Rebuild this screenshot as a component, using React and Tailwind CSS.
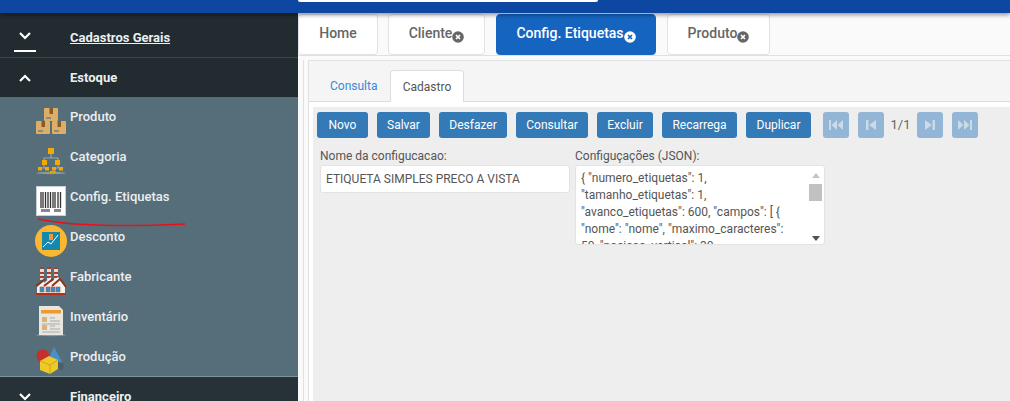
const F = { fontFamily: 'Roboto, "Liberation Sans", sans-serif' };

const Chevron = ({ up }) => (
  <svg width="12" height="8" viewBox="0 0 12 8" fill="none" stroke="#fff" strokeWidth="2.2">
    <path d={up ? "M1 7l5-5 5 5" : "M1 1l5 5 5-5"} />
  </svg>
);

const Box = ({ x, y }) => (
  <g transform={`translate(${x} ${y})`}>
    <rect width="14" height="13" rx="1" fill="#dcae66" />
    <rect x="5.5" width="3.5" height="6" fill="#8a5a2a" />
    <rect x="2" y="9" width="5" height="2" fill="#8b8b80" />
  </g>
);

const icons = {
  produto: (
    <svg width="32" height="28" viewBox="0 0 32 28">
      <Box x="9" y="1" /><Box x="1" y="14" /><Box x="17" y="14" />
    </svg>
  ),
  categoria: (
    <svg width="32" height="28" viewBox="0 0 32 28">
      <ellipse cx="16" cy="26" rx="15" ry="1.2" fill="#8d9ca3" />
      <path d="M16 6v5M9 14v-3h14v3M9 18v3M5 23v-2h8v2M23 18v3M19 23v-2h8v2" stroke="#9aa5a8" strokeWidth="1.2" fill="none" />
      <rect x="13" y="1" width="6" height="6" fill="#f2a900" />
      <rect x="7" y="13" width="5" height="5" fill="#f2a900" /><rect x="20" y="13" width="5" height="5" fill="#f2a900" />
      <rect x="3" y="20" width="4" height="3.5" fill="#f2a900" /><rect x="10" y="20" width="4" height="3.5" fill="#f2a900" />
      <rect x="17" y="20" width="4" height="3.5" fill="#f2a900" /><rect x="24" y="20" width="4" height="3.5" fill="#f2a900" />
      <rect x="15" y="24" width="2.5" height="2" fill="#f2a900" /><rect x="18" y="24" width="2.5" height="2" fill="#f2a900" />
    </svg>
  ),
  etiqueta: (
    <svg width="30" height="30" viewBox="0 0 30 30">
      <rect x="0.5" y="0.5" width="29" height="29" fill="#fff" stroke="#c9cfd2" />
      <path d="M5 6v16M7 6v16M9.500 6v16M12 6v16M14.500 6v16M17 6v16M19 6v16M22 6v16M24.500 6v16" stroke="#333" strokeWidth="1.300" />
      <rect x="5" y="23" width="9" height="3" fill="#888" /><rect x="18" y="23" width="7" height="3" fill="#888" />
    </svg>
  ),
  desconto: (
    <svg width="32" height="32" viewBox="0 0 32 32">
      <circle cx="16" cy="16" r="16" fill="#fbb72f" />
      <rect x="7" y="7" width="18" height="18" fill="#1687ad" />
      <path d="M8 22l5-5 3 2 7-9" stroke="#fff" strokeWidth="1" fill="none" />
      <rect x="14" y="9" width="4" height="6" fill="#f39a35" />
    </svg>
  ),
  fabricante: (
    <svg width="32" height="30" viewBox="0 0 32 30">
      {[5, 12, 19].map((x) => (
        <g key={x}>
          <rect x={x} y="1" width="4" height="13" fill="#ddd" />
          <rect x={x} y="1" width="4" height="2" fill="#a8402a" /><rect x={x} y="6" width="4" height="2" fill="#a8402a" /><rect x={x} y="10" width="4" height="2" fill="#a8402a" />
        </g>
      ))}
      <path d="M2 21l7-6v2l7-6v5l7-5 7 9v7H2z" fill="#f2f2f0" />
      <path d="M1 20l9-7M9 20l9-7M17 20l8-7 6 8" stroke="#93301f" strokeWidth="2" fill="none" />
      {[5, 11, 16, 21].map((x) => <rect key={x} x={x} y="21" width="4" height="5" fill="#2f8fd0" stroke="#c3562f" strokeWidth="0.6" />)}
      <rect x="1" y="27" width="30" height="2" fill="#b5301c" />
    </svg>
  ),
  inventario: (
    <svg width="32" height="32" viewBox="0 0 32 32">
      <ellipse cx="16" cy="30" rx="15" ry="1.200" fill="#8d9ca3" />
      <path d="M4 1h20l4 4v25H4z" fill="#e8e6df" />
      <rect x="6" y="5" width="20" height="3.500" fill="#ec9a29" />
      <rect x="7" y="12" width="5" height="5" fill="#d9b47a" /><rect x="7" y="20" width="5" height="5" fill="#d9b47a" />
      <path d="M15 13h5M15 16h10M7 19h18M15 21h5M15 24h10M7 27h18" stroke="#a9adac" strokeWidth="1" />
    </svg>
  ),
  producao: (
    <svg width="32" height="28" viewBox="0 0 32 28">
      <path d="M19 0l8 15-5 4-9-6z" fill="#4a90c8" />
      <path d="M22 14l7 3-1 6-5-1z" fill="#4f5f66" />
      <circle cx="8" cy="9" r="6.500" fill="#c4302b" />
      <path d="M14 9l9 4v9l-8 5-10-4v-9z" fill="#eeca28" />
      <path d="M5 14l10 4 8-5M15 18v9" stroke="#b99a10" strokeWidth="0.700" fill="none" />
    </svg>
  ),
};

const items = [
  ["Produto", "produto"], ["Categoria", "categoria"], ["Config. Etiquetas", "etiqueta"], ["Desconto", "desconto"],
  ["Fabricante", "fabricante"], ["Inventário", "inventario"], ["Produção", "producao"],
];

const Sidebar = () => (
  <aside className="w-[298px] shrink-0 flex flex-col h-[388px] overflow-hidden bg-[#263238] relative">
    <div className="h-[45px] shrink-0 flex bg-[#212b30] border-b border-[#3a464c]">
      <div className="w-[50px] mr-[20px] flex justify-center">
        <div className="w-[22px] h-[39px] pt-[8px] flex items-center justify-center border-b-2 border-white"><Chevron /></div>
      </div>
      <span className="text-[13px] font-bold text-[#eceff1] underline leading-[15px] mt-[17px]">Cadastros Gerais</span>
    </div>
    <div className="h-[39px] shrink-0 flex items-center bg-[#212b30]">
      <div className="w-[50px] mr-[20px] flex justify-center"><Chevron up /></div>
      <span className="text-[13px] font-bold text-[#eceff1]">Estoque</span>
    </div>
    <div className="h-[280px] shrink-0 bg-[#566e7a] border-b border-[#7e929c] flex flex-col">
      {items.map(([label, key]) => (
        <div key={key} className="h-[40px] shrink-0 flex relative">
          <div className="w-[70px] h-[40px] pt-[8px] pl-[34px] pr-[2px] flex items-center justify-center shrink-0">{icons[key]}</div>
          <span className="text-[13px] font-medium text-[#eceff1] leading-[15px] mt-[12px]">{label}</span>
        </div>
      ))}
    </div>
    <div className="h-[40px] shrink-0 flex items-center bg-[#263238]">
      <div className="w-[50px] mr-[20px] flex justify-center"><Chevron /></div>
      <span className="text-[13px] font-bold text-[#eceff1]">Financeiro</span>
    </div>
    <svg className="absolute left-[36px] top-[205px]" width="150" height="12" viewBox="0 0 150 12" fill="none">
      <path d="M2 1C20 5 60 10 149 6" stroke="#e8101a" strokeWidth="1.300" />
    </svg>
  </aside>
);

const MainTab = ({ label, close, active, w }) => (
  <div className={`h-[41px] rounded-[4px] border flex items-center justify-center text-[14px] font-medium ${w} ${active ? "bg-[#1565c0] border-[#1565c0] text-white" : "bg-white border-[#dfe3e6] text-[#666]"}`}>
    <span className="-mt-[3px]">{label}</span>
    {close && (
      <svg className="mt-[4px]" width="12" height="12" viewBox="0 0 12 12">
        <circle cx="6" cy="6" r="5.800" fill={active ? "#fff" : "#666"} />
        <path d="M4 4l4 4M8 4l-4 4" stroke={active ? "#1565c0" : "#fff"} strokeWidth="1.700" />
      </svg>
    )}
  </div>
);

const Btn = ({ children, w }) => (
  <button className={`h-[26px] rounded-[3px] bg-[#337ab7] text-white text-[12px] text-center ${w}`}>{children}</button>
);

const Pager = ({ d }) => (
  <div className="w-[26px] h-[26px] rounded-[3px] bg-[#93b5d6] flex items-center justify-center">
    <svg width="16" height="12" viewBox="0 0 16 12" fill="#c9dae9"><path d={d} /></svg>
  </div>
);

const json = `{ "numero_etiquetas": 1, "tamanho_etiquetas": 1, "avanco_etiquetas": 600, "campos": [ { "nome": "nome", "maximo_caracteres": 50, "posicao_vertical": 30,`;

const Main = () => (
  <main className="flex-1 min-w-0 bg-[#fafafa] h-[388px] overflow-hidden">
    <div className="h-[43px] flex gap-[10px] pt-px border-b border-[#e0e0e0]">
      <MainTab label="Home" w="w-[80px]" />
      <MainTab label="Cliente" close w="w-[97px]" />
      <MainTab label="Config. Etiquetas" close active w="w-[160px] ml-[1px]" />
      <MainTab label="Produto" close w="w-[103px] ml-[1px]" />
    </div>
    <div className="mt-[4px] ml-[5px] h-[341px] border-l border-[#e0e0e0] pl-[4px]">
      <div className="h-[341px] bg-[#f5f5f5] border-t border-l border-[#dfe1e3]">
        <div className="h-[41px] flex items-end pl-[10px] border-b border-[#dddddd]">
          <div className="w-[71px] h-[31px] flex items-center pl-[11px] text-[12px] text-[#3a87d6]">Consulta</div>
          <div className="w-[74px] h-[32px] -mb-px flex items-center justify-center text-[12px] text-[#555] bg-white border border-b-0 border-[#dddddd] rounded-t-[4px]">Cadastro</div>
        </div>
        <div className="bg-white pl-[4px] pt-[5px] h-[299px]">
          <div className="bg-[#eeeeee] h-[294px]">
            <div className="flex items-center pt-[5px] pl-[4px]">
              <div className="flex gap-[9px]">
                <Btn w="w-[51px]">Novo</Btn>
                <Btn w="w-[53px]">Salvar</Btn>
                <Btn w="w-[68px]">Desfazer</Btn>
                <Btn w="w-[72px]">Consultar</Btn>
                <Btn w="w-[56px]">Excluir</Btn>
                <Btn w="w-[75px]">Recarrega</Btn>
                <Btn w="w-[65px]">Duplicar</Btn>
              </div>
              <div className="flex items-center ml-[12px]">
                <Pager d="M1 1h2v10H1zM9 1v10L3.500 6zM15 1v10L9.500 6z" />
                <div className="w-[9px]" />
                <Pager d="M3 1h2.500v10H3zM13 1v10L6 6z" />
                <span className="w-[33px] text-center text-[13px] text-[#666]">1/1</span>
                <Pager d="M3 1v10l7-5zM10.500 1H13v10h-2.500z" />
                <div className="w-[9px]" />
                <Pager d="M1 1v10l5.500-5zM7 1v10l5.500-5zM13 1h2v10h-2z" />
              </div>
            </div>
            <div className="flex gap-[5px] pl-[7px] pt-[11px]">
              <div className="w-[250px]">
                <div className="text-[12px] text-[#555] leading-[14px] mb-[2px]">Nome da configucacao:</div>
                <div className="h-[28px] bg-white rounded-[3px] border border-[#e3e3e3] flex items-center pl-[5px] text-[12px] text-[#555]">ETIQUETA SIMPLES PRECO A VISTA</div>
              </div>
              <div className="w-[250px]">
                <div className="text-[12px] text-[#555] leading-[14px] mb-[2px]">Configuçações (JSON):</div>
                <div className="h-[80px] bg-white rounded-[3px] border border-[#e3e3e3] flex overflow-hidden">
                  <div className="flex-1 overflow-hidden pl-[5px] pt-[4px] pr-[10px] text-[12px] leading-[17px] text-[#555]">{json}</div>
                  <div className="w-[17px] shrink-0 flex flex-col items-center pt-[7px]">
                    <svg width="8" height="5" viewBox="0 0 8 5"><path d="M4 0l4 5H0z" fill="#c4c4c4" /></svg>
                    <div className="w-[13px] h-[17px] bg-[#c1c1c1] mt-[6px]" />
                    <svg className="mt-[35px]" width="8" height="5" viewBox="0 0 8 5"><path d="M4 5L0 0h8z" fill="#505050" /></svg>
                  </div>
                </div>
              </div>
            </div>
          </div>
        </div>
      </div>
    </div>
  </main>
);

export default function App() {
  return (
    <div style={F} className="w-[1010px] h-[401px] overflow-hidden bg-[#fafafa]">
      <header className="h-[13px] bg-[#0d47a1] shadow-[0_2px_4px_rgba(0,0,0,0.4)] relative z-10">
        <div className="ml-[298px] w-[300px] h-[2px] bg-white rounded-b-[3px]" />
      </header>
      <div className="flex">
        <Sidebar />
        <Main />
      </div>
    </div>
  );
}
